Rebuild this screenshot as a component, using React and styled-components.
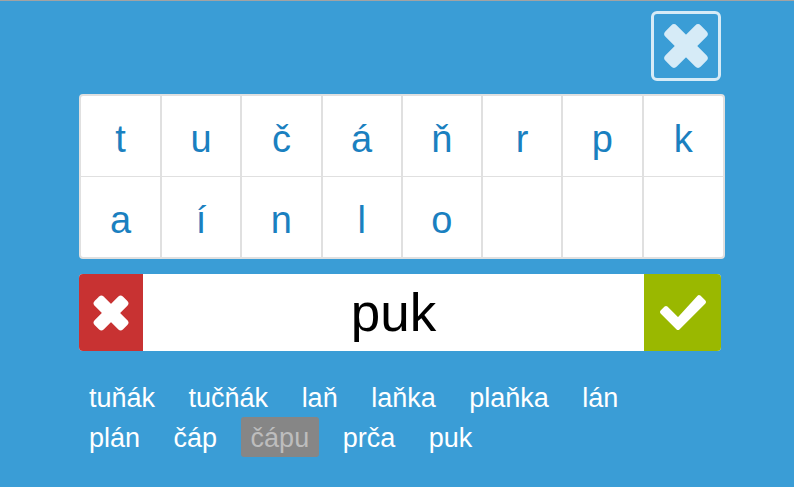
import styled, { createGlobalStyle } from "styled-components";

const GlobalStyle = createGlobalStyle`
  html, body {
    margin: 0;
    padding: 0;
    background: #3a9dd6;
    font-family: "Liberation Sans", Arial, sans-serif;
  }
`

const Screen = styled.div`
  width: 794px;
  height: 487px;
  box-sizing: border-box;
  border-top: 1px solid #a3a3a3;
  background: #3a9dd6;
  padding: 10px 0 0 79px;
  overflow: hidden;
`
const TopBar = styled.div`
  width: 642px;
  height: 70px;
  display: flex;
  justify-content: flex-end;
  margin-bottom: 13px;
`
const CloseBtn = styled.button`
  width: 70px;
  height: 70px;
  padding: 0;
  box-sizing: border-box;
  border: 3px solid #d6ebf7;
  border-radius: 6px;
  background: transparent;
  display: flex;
  align-items: center;
  justify-content: center;
`
const Board = styled.div`
  width: 646px;
  height: 165px;
  box-sizing: border-box;
  border: 2px solid #e0e0e0;
  border-radius: 4px;
  background: #fff;
  display: grid;
  grid-template-columns: 81px repeat(6, 80.25px) 1fr;
  grid-template-rows: 81px 80px;
  margin-bottom: 15px;
`
const Cell = styled.div`
  display: flex;
  align-items: center;
  justify-content: center;
  padding-top: 7px;
  font-size: 38px;
  color: #1a80c0;
  box-sizing: border-box;
  border-right: ${(props) => (props.$lastCol ? "none" : "2px solid #e0e0e0")};
  border-bottom: ${(props) => (props.$lastRow ? "none" : "1px solid #e0e0e0")};
`
const AnswerRow = styled.div`
  width: 642px;
  height: 77px;
  display: flex;
  border-radius: 4px;
  overflow: hidden;
  background: #fff;
  margin-bottom: 26px;
`
const ActionBtn = styled.div`
  width: ${(props) => props.$width}px;
  flex: none;
  background: ${(props) => props.$bg};
  display: flex;
  align-items: center;
  justify-content: center;
`
const AnswerText = styled.div`
  flex: 1;
  text-align: center;
  font-size: 53px;
  line-height: 77px;
  color: #000;
`
const WordList = styled.div`
  width: 600px;
  display: flex;
  flex-wrap: wrap;
  column-gap: 13.5px;
`
const Word = styled.div`
  height: 40px;
  line-height: 42px;
  padding: 0 10px;
  font-size: 27px;
  border-radius: 3px;
  color: ${(props) => (props.$found ? "#bdbdbd" : "#fff")};
  background: ${(props) => (props.$found ? "#868686" : "transparent")};
`

const CrossIcon = ({ size, color }) => (
  <svg width={size} height={size} viewBox="0 0 50 50">
    <rect x="0" y="17" width="50" height="16" rx="4" fill={color} transform="rotate(45 25 25)" />
    <rect x="0" y="17" width="50" height="16" rx="4" fill={color} transform="rotate(-45 25 25)" />
  </svg>
)

const CheckIcon = () => (
  <svg width="48" height="37" viewBox="0 0 48 37">
    <polygon
      points="3,18 7,14 19,26 40,3 45,8 19,34"
      fill="#fff"
      stroke="#fff"
      strokeWidth="4"
      strokeLinejoin="round"
    />
  </svg>
)

const letters = ["t", "u", "č", "á", "ň", "r", "p", "k", "a", "í", "n", "l", "o", "", "", ""]
const words = ["tuňák", "tučňák", "laň", "laňka", "plaňka", "lán", "plán", "čáp", "čápu", "prča", "puk"]

export default function App() {
  return (
    <Screen>
      <GlobalStyle />
      <TopBar>
        <CloseBtn>
          <CrossIcon size={50} color="#d6ebf7" />
        </CloseBtn>
      </TopBar>
      <Board>
        {letters.map((letter, i) => (
          <Cell key={i} $lastCol={i % 8 === 7} $lastRow={i >= 8}>{letter}</Cell>
        ))}
      </Board>
      <AnswerRow>
        <ActionBtn $width={64} $bg="#c83232">
          <CrossIcon size={40} color="#fff" />
        </ActionBtn>
        <AnswerText>puk</AnswerText>
        <ActionBtn $width={77} $bg="#9ab800">
          <CheckIcon />
        </ActionBtn>
      </AnswerRow>
      <WordList>
        {words.map((word) => (
          <Word key={word} $found={word === "čápu"}>{word}</Word>
        ))}
      </WordList>
    </Screen>
  )
}
